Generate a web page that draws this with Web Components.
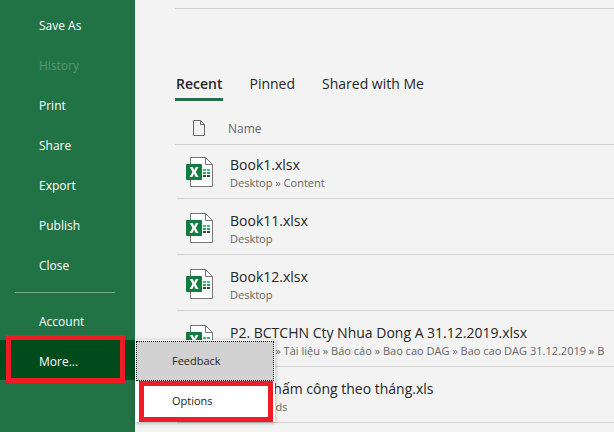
<!DOCTYPE html>
<html lang="en">
<head>
<meta charset="utf-8">
<title>Excel - Open</title>
<style>
html, body { height: 100%; margin: 0; }
body { overflow: hidden; background: #f3f3f3; color: #262626; font: 12px/16px "Open Sans", "Noto Sans", sans-serif; }
</style>
</head>
<body>
<backstage-view>
  <side-nav slot="nav">
    <nav-item>Save As</nav-item>
    <nav-item disabled>History</nav-item>
    <nav-item>Print</nav-item>
    <nav-item>Share</nav-item>
    <nav-item>Export</nav-item>
    <nav-item>Publish</nav-item>
    <nav-item>Close</nav-item>
    <nav-divider></nav-divider>
    <nav-item>Account</nav-item>
    <nav-item active>More...
      <more-menu slot="menu">
        <menu-option focused>Feedback</menu-option>
        <menu-option marked>Options</menu-option>
      </more-menu>
    </nav-item>
  </side-nav>
  <file-tabs>
    <file-tab selected>Recent</file-tab>
    <file-tab>Pinned</file-tab>
    <file-tab>Shared with Me</file-tab>
  </file-tabs>
  <recent-files></recent-files>
</backstage-view>
<script>
const define = (name, html, setup) => {
  const template = document.createElement('template');
  template.innerHTML = html;
  customElements.define(name, class extends HTMLElement {
    connectedCallback() {
      if (this.shadowRoot) return;
      this.attachShadow({ mode: 'open' }).append(template.content.cloneNode(true));
      if (setup) setup(this, this.shadowRoot);
    }
  });
};

define('backstage-view', `
<style>
:host { display: grid; grid-template-columns: 135px minmax(0, 1fr); min-height: 100vh; }
main { padding-left: 40px; }
.search { height: 8px; border-bottom: 1px solid #d0d0d0; }
</style>
<slot name="nav"></slot>
<main><div class="search"></div><slot></slot></main>`);

define('side-nav', `
<style>
:host { display: block; position: relative; z-index: 1; background: #217346; }
nav { display: flex; flex-direction: column; padding-top: 4px; }
</style>
<nav aria-label="File"><slot></slot></nav>`);

define('nav-divider', `
<style>
:host { display: block; height: 1px; margin: 8px 20px 7px 15px; background: #72ab8a; }
</style>`);

define('nav-item', `
<style>
:host { display: block; position: relative; }
button { display: block; width: 100%; height: 40px; padding: 4px 0 0 39px; border: 0; background: none; color: #fff; font: inherit; text-align: left; }
button:disabled { color: #549770; }
:host([active]) button { background: #004b1c; }
:host([active])::after { content: ""; position: absolute; inset: -5px 10px -3px 6px; border: 5px solid #ee1c24; pointer-events: none; }
::slotted(more-menu) { position: absolute; left: 100%; top: 0; }
</style>
<button type="button"><slot></slot></button><slot name="menu"></slot>`, (host, root) => {
  if (host.hasAttribute('disabled')) root.querySelector('button').disabled = true;
});

define('more-menu', `
<style>
:host { display: block; width: 138px; padding: 1px; background: #fff; font-size: 11px; box-shadow: 0 1px 4px rgba(0,0,0,.3); }
</style>
<div role="menu"><slot></slot></div>`);

define('menu-option', `
<style>
:host { display: block; position: relative; }
button { display: block; width: 100%; height: 40px; padding: 0 0 0 36px; border: 0; background: #fff; color: #262626; font: inherit; text-align: left; }
:host([focused]) button { background: #d2d2d2; padding-left: 35px; border: 1px dotted #000; }
:host([marked])::after { content: ""; position: absolute; inset: 0 1px -1px 3px; border: 5px solid #ee1c24; pointer-events: none; }
</style>
<button type="button" role="menuitem"><slot></slot></button>`);

define('file-tabs', `
<style>
:host { display: block; padding-top: 62px; }
div { display: flex; gap: 25px; }
</style>
<div role="tablist"><slot></slot></div>`);

define('file-tab', `
<style>
:host { display: block; }
button { display: block; height: 30px; padding: 0 1px 2px; border: 0; border-bottom: 3px solid transparent; background: none; color: #262626; font: inherit; font-size: 14px; line-height: 20px; white-space: nowrap; }
:host([selected]) button { border-color: #217346; font-weight: 600; }
</style>
<button type="button" role="tab"><slot></slot></button>`, (host, root) => {
  root.querySelector('button').setAttribute('aria-selected', host.hasAttribute('selected'));
});

define('page-icon', `
<style>:host, svg { display: block; }</style>
<svg width="12" height="16" viewBox="0 0 12 16" fill="none" stroke="#666" aria-hidden="true">
<path d="M.5.5H7.5L11.5 4.5V15.5H.5ZM7.5.5V4.5H11.5"/></svg>`);

define('workbook-icon', `
<style>:host, svg { display: block; }</style>
<svg width="27" height="30" viewBox="0 0 27 30" aria-hidden="true">
<path d="M4.5.5H19.5L26.5 7.5V29.5H4.5Z" fill="#fff" stroke="#777"/>
<path d="M19.5.5V7.5H26.5" fill="none" stroke="#777"/>
<path d="M17 12h3v2h-3zM21 12h3v2h-3z" fill="#33c481"/>
<path d="M17 15h3v2h-3zM21 15h3v2h-3z" fill="#21a366"/>
<path d="M17 18h3v2h-3zM21 18h3v2h-3z" fill="#185c37"/>
<rect y="7" width="16" height="16" rx="1" fill="#107c41"/>
<path d="M3.8 10H6.7L8.2 13.2L9.8 10H12.5L9.7 15L12.6 20H9.7L8 16.7L6.3 20H3.5L6.5 15Z" fill="#fff"/></svg>`);

const files = [
  ['Book1.xlsx', 'Desktop » Content'],
  ['Book11.xlsx', 'Desktop'],
  ['Book12.xlsx', 'Desktop'],
  ['P2. BCTCHN Cty Nhua Dong A 31.12.2019.xlsx', 'Desktop » Tài liệu » Báo cáo » Bao cao DAG » Bao cao DAG 31.12.2019 » B'],
  ['Bảng chấm công theo tháng.xls', 'Downloads']
];

define('recent-files', `
<style>
:host { display: block; padding-top: 11px; }
table, thead, tbody { display: block; }
tr { display: grid; align-items: center; box-sizing: border-box; border-bottom: 1px solid #d0d0d0; }
th, td { padding: 0; text-align: left; font-weight: 400; white-space: nowrap; min-width: 0; }
thead tr { grid-template-columns: 35px minmax(0, 1fr); height: 33px; padding-left: 18px; color: #666; }
thead th:last-child { padding-top: 2px; }
tbody tr { grid-template-columns: 44px minmax(0, 1fr); height: 56px; margin-left: 2px; padding: 2px 0 0 9px; }
tbody tr:first-child { height: 54px; padding-top: 0; }
tbody td { overflow: hidden; }
tbody td:last-child { padding-top: 2px; }
.name { font-size: 14px; line-height: 20px; }
.path { font-size: 11px; line-height: 16px; color: #666; }
</style>
<table>
<thead><tr><th aria-label="Type"><page-icon></page-icon></th><th>Name</th></tr></thead>
<tbody></tbody>
</table>`, (host, root) => {
  root.querySelector('tbody').innerHTML = files.map(([name, path]) =>
    `<tr><td><workbook-icon></workbook-icon></td><td><div class="name">${name}</div><div class="path">${path}</div></td></tr>`).join('');
});
</script>
</body>
</html>
